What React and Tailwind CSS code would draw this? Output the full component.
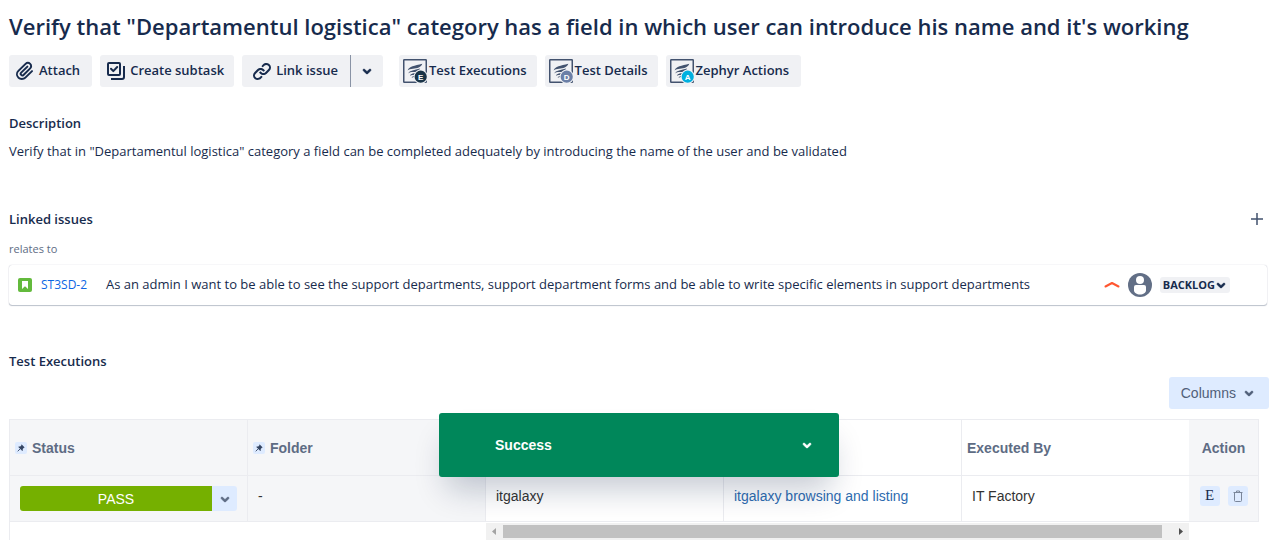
import React from "react";

const ui = "font-['Open_Sans','Noto_Sans',sans-serif]";
const arial = "font-['Liberation_Sans',Arial,sans-serif]";

function Chevron({ className = "w-6" }) {
  return (
    <svg viewBox="0 0 24 24" preserveAspectRatio="xMidYMid slice" className={`h-6 ${className}`} fill="currentColor" stroke="currentColor" strokeWidth="0.6" aria-hidden="true">
      <path d="M8.292 10.293a1.009 1.009 0 000 1.419l2.939 2.965c.218.215.5.322.779.322s.556-.107.769-.322l2.93-2.955a1.01 1.01 0 000-1.419.987.987 0 00-1.406 0l-2.298 2.317-2.307-2.327a.99.99 0 00-1.406 0z" />
    </svg>
  );
}

function AttachIcon() {
  return (
    <svg viewBox="0 0 24 24" className="size-6 shrink-0" fill="currentColor" aria-hidden="true">
      <path d="M11.643 17.965c-1.53 1.495-4.016 1.496-5.542.004a3.773 3.773 0 01.002-5.412l7.147-6.985a2.316 2.316 0 013.233-.003c.893.873.895 2.282.004 3.153l-6.703 6.55a.653.653 0 01-.914-.008.62.62 0 010-.902l6.229-6.087a.941.941 0 000-1.353.995.995 0 00-1.384 0l-6.23 6.087a2.502 2.502 0 000 3.607 2.643 2.643 0 003.683.009l6.703-6.55a4.074 4.074 0 00-.003-5.859 4.306 4.306 0 00-6.002.003l-7.148 6.985a5.655 5.655 0 00-.001 8.118c2.29 2.239 6.015 2.238 8.31-.005l6.686-6.533a.941.941 0 000-1.353.995.995 0 00-1.384 0l-6.686 6.534z" />
    </svg>
  );
}

function SubtaskIcon() {
  return (
    <svg viewBox="0 0 24 24" className="size-6 shrink-0" fill="none" stroke="currentColor" strokeWidth="2" aria-hidden="true">
      <rect x="4" y="4" width="12" height="12" rx="1" />
      <path d="M7 9.8l2.3 2.3L13.2 8" strokeLinecap="round" strokeLinejoin="round" />
      <path d="M20 7v11a2 2 0 01-2 2H7" />
    </svg>
  );
}

function LinkIcon() {
  return (
    <svg viewBox="0 0 24 24" className="size-6 shrink-0" fill="currentColor" aria-hidden="true">
      <path d="M12.856 5.457l-.937.92a1.002 1.002 0 000 1.437 1.047 1.047 0 001.463 0l.984-.966c.967-.95 2.542-1.135 3.602-.288a2.54 2.54 0 01.203 3.81l-2.903 2.852a2.646 2.646 0 01-3.696 0l-1.11-1.09L9 13.57l1.108 1.089c1.822 1.788 4.802 1.788 6.622 0l2.905-2.852a4.558 4.558 0 00-.357-6.82c-1.893-1.517-4.695-1.226-6.422.47" />
      <path d="M11.144 19.543l.937-.92a1.002 1.002 0 000-1.437 1.047 1.047 0 00-1.462 0l-.985.966c-.967.95-2.542 1.135-3.602.288a2.54 2.54 0 01-.203-3.81l2.903-2.852a2.646 2.646 0 013.696 0l1.11 1.09L15 11.43l-1.108-1.089c-1.822-1.788-4.802-1.788-6.622 0l-2.905 2.852a4.558 4.558 0 00.357 6.82c1.893 1.517 4.695 1.226 6.422-.47" />
    </svg>
  );
}

function ZephyrIcon({ letter, color }) {
  return (
    <svg viewBox="0 0 24 24" className="size-6 shrink-0" aria-hidden="true">
      <rect x="0.75" y="0.75" width="22.5" height="22.5" rx="0.5" fill="none" stroke="#42526e" strokeWidth="1.5" />
      <g fill="#42526e">
        <path d="M4.600 11.600C6 7.200 11.500 7 19.300 4.800c-1.200 3.400-5.200 4.700-9.300 4.900-2.400.1-4.200.5-5.400 1.900z" />
        <path d="M5.200 14.600c1.300-3.800 6.300-3.300 11.900-5.200-1.200 2.900-4.200 3.600-6.900 3.700-2.100.1-3.800.3-5 1.500z" />
        <path d="M6.800 17c1.200-2.900 4-2.300 7.500-3.700-1 2.300-2.600 2.500-4.200 2.600-1.400.1-2.400.3-3.300 1.100z" />
        <path d="M8.600 18.900c.7-1.800 2.200-1.700 3.900-2.300-.6 1.500-1.400 1.600-2.300 1.700-.7.1-1.100.2-1.600.6z" />
      </g>
      <circle cx="17.700" cy="17.700" r="7.100" fill="#f0f1f4" />
      <circle cx="17.700" cy="17.700" r="6.100" fill={color} />
      <text x="17.700" y="20.500" textAnchor="middle" fontSize="8" fontWeight="700" fontFamily="Liberation Sans" fill="#fff">
        {letter}
      </text>
    </svg>
  );
}

function PinIcon() {
  return (
    <span className="flex size-3 items-center justify-center rounded-xs bg-[#deebff]">
      <svg viewBox="0 0 12 12" className="size-3" aria-hidden="true">
        <path d="M6.500 2.300l3.200 3.200-.8.200-1.200 1.200.1 1.500-.5.500L3.300 4.900l.5-.5 1.500.1 1.100-1.200z" fill="#344563" />
        <path d="M5.200 6.800L2.700 9.300" stroke="#344563" strokeWidth="0.9" />
      </svg>
    </span>
  );
}

function TrashIcon() {
  return (
    <svg viewBox="0 0 10 12" className="h-3 w-2.5" fill="none" stroke="#7a869a" aria-hidden="true">
      <path d="M0.500 2.500h9M3.500 2V1h3v1" />
      <path d="M1.500 3v7.500a1 1 0 001 1h5a1 1 0 001-1V3" />
    </svg>
  );
}

const toolButton = "flex h-8 items-center rounded-[3px] bg-[#f0f1f4] whitespace-nowrap";
const heading = "text-[13px] leading-5 font-semibold";
const cell = "border-b border-r border-[#ebecf0]";

export default function App() {
  return (
    <main className={`${ui} overflow-hidden bg-white pt-3 pr-[5px] pl-[9px] text-[13px] text-[#172b4d]`}>
      <h1 className="text-[22px] leading-7 font-semibold whitespace-nowrap">
        Verify that "Departamentul logistica" category has a field in which user can introduce his name and it's working
      </h1>

      <div className="mt-[15px] flex font-semibold">
        <button className={`${toolButton} gap-[2px] pr-3 pl-1`}>
          <AttachIcon />
          Attach
        </button>
        <button className={`${toolButton} ml-2 gap-[2px] pr-2.5 pl-1`}>
          <SubtaskIcon />
          Create subtask
        </button>
        <button className={`${toolButton} ml-2 gap-[2px] rounded-r-none pr-3 pl-2`}>
          <LinkIcon />
          Link issue
        </button>
        <button aria-label="More link options" className={`${toolButton} w-[33px] justify-center rounded-l-none border-l border-[#8993a5]`}>
          <Chevron />
        </button>
        <button className={`${toolButton} ml-4 gap-[2px] pr-2.5 pl-1`}>
          <ZephyrIcon letter="E" color="#1a3448" />
          Test Executions
        </button>
        <button className={`${toolButton} ml-2 gap-[2px] pr-2.5 pl-1`}>
          <ZephyrIcon letter="D" color="#6b7fa6" />
          Test Details
        </button>
        <button className={`${toolButton} ml-2 gap-[2px] pr-3 pl-1`}>
          <ZephyrIcon letter="A" color="#00b0e0" />
          Zephyr Actions
        </button>
      </div>

      <section className="mt-[26px]">
        <h2 className={heading}>Description</h2>
        <p className="mt-2 leading-5">
          Verify that in "Departamentul logistica" category a field can be completed adequately by introducing the name of the user and be validated
        </p>
      </section>

      <section className="mt-12">
        <div className="flex items-center justify-between pr-1.5">
          <h2 className={heading}>Linked issues</h2>
          <button aria-label="Link an issue" className="size-3">
            <svg viewBox="0 0 12 12" className="size-3" stroke="#42526e" strokeWidth="1.500" aria-hidden="true">
              <path d="M6 0v12M0 6h12" />
            </svg>
          </button>
        </div>
        <h3 className="mt-3 text-[11px] leading-4 text-[#5e6c84]">relates to</h3>
        <div className="mt-2 mr-[2px] flex h-10 items-center rounded-[3px] pr-[37px] pl-[9px] shadow-[0_1px_1px_rgba(9,30,66,0.25),0_0_1px_rgba(9,30,66,0.31)]">
          <svg viewBox="0 0 14 14" className="size-3.5 shrink-0" aria-hidden="true">
            <rect width="14" height="14" rx="2" fill="#63ba3c" />
            <path d="M4 3h6v8L7 8.300 4 11z" fill="#fff" />
          </svg>
          <a href="#ST3SD-2" className="ml-[9px] w-[65px] text-[12px] text-[#0c66e4]">ST3SD-2</a>
          <span className="grow whitespace-nowrap">
            As an admin I want to be able to see the support departments, support department forms and be able to write specific elements in support departments
          </span>
          <svg viewBox="0 0 16 8" className="h-2 w-4 shrink-0" fill="none" stroke="#ff5630" strokeWidth="2" strokeLinecap="round" strokeLinejoin="round" aria-hidden="true">
            <path d="M1.500 5.500L8 2l6.500 3.500" />
          </svg>
          <svg viewBox="0 0 24 24" className="ml-2 size-6 shrink-0" aria-hidden="true">
            <circle cx="12" cy="12" r="12" fill="#626f86" />
            <circle cx="12" cy="7" r="4" fill="#fff" />
            <path d="M6 14a2 2 0 012-2h8a2 2 0 012 2v3.500c0 2.200-2.700 4-6 4s-6-1.800-6-4z" fill="#fff" />
          </svg>
          <button className="ml-2 flex h-4 items-center rounded-[3px] bg-[#f0f1f4] px-[3px] text-[11px] font-bold">
            BACKLOG
            <Chevron className="w-3" />
          </button>
        </div>
      </section>

      <section className={`relative mt-[46px] ${arial}`}>
        <h2 className={`${heading} ${ui}`}>Test Executions</h2>
        <div className="mt-1.5 flex justify-end">
          <button className="flex h-8 items-center gap-[1px] rounded-[3px] bg-[#deebff] pr-2 pl-3 text-sm text-[#505f79]">
            Columns
            <Chevron />
          </button>
        </div>

        <div className="mt-2.5 mr-2.5 border-l border-[#ebecf0]">
          <table className="w-full table-fixed border-separate border-spacing-0 border-t border-[#ebecf0] text-left text-sm text-[#333]">
            <colgroup>
              <col className="w-[238px]" />
              <col className="w-[238px]" />
              <col className="w-[238px]" />
              <col className="w-[238px]" />
              <col />
              <col className="w-[70px]" />
            </colgroup>
            <thead className="text-[#5e6c84]">
              <tr className="h-14">
                <th className={`${cell} bg-[#f5f6f8] pl-[5px]`}>
                  <span className="flex items-center gap-[5px]"><PinIcon />Status</span>
                </th>
                <th className={`${cell} bg-[#f5f6f8] pl-[5px]`}>
                  <span className="flex items-center gap-[5px]"><PinIcon />Folder</span>
                </th>
                <th className={cell}></th>
                <th className={cell}></th>
                <th className={`${cell} border-r-0 pl-[5px]`}>Executed By</th>
                <th className={`${cell} bg-[#f5f6f8] text-center`}>Action</th>
              </tr>
            </thead>
            <tbody>
              <tr className="h-[46px]">
                <td className={`${cell} bg-[#f5f6f8] px-2.5`}>
                  <div className="flex h-[25px] overflow-hidden rounded-[3px]">
                    <button className="grow bg-[#75b000] text-white">PASS</button>
                    <button aria-label="Change status" className="flex w-[25px] items-center justify-center bg-[#deebff] text-[#5e6c84]">
                      <Chevron />
                    </button>
                  </div>
                </td>
                <td className={`${cell} bg-[#f5f6f8] px-2.5 pb-1.5`}>-</td>
                <td className={`${cell} px-2.5 pb-1.5`}>itgalaxy</td>
                <td className={`${cell} px-2.5 pb-1.5`}>
                  <a href="#cycle" className="text-[#2e6cb0]">itgalaxy browsing and listing</a>
                </td>
                <td className={`${cell} border-r-0 px-2.5 pb-1.5`}>IT Factory</td>
                <td className={`${cell} bg-[#f5f6f8] pb-1.5`}>
                  <div className="flex justify-center gap-2">
                    <button aria-label="Execute" className="flex size-5 items-center justify-center rounded-[3px] bg-[#deebff] font-['Liberation_Serif',serif] text-[15px] text-[#172b4d]">E</button>
                    <button aria-label="Delete" className="flex size-5 items-center justify-center rounded-[3px] bg-[#deebff]">
                      <TrashIcon />
                    </button>
                  </div>
                </td>
              </tr>
            </tbody>
          </table>
          <div className="mt-px flex pr-[70px] pl-[476px]">
            <div className="flex h-[17px] grow items-center bg-[#f1f1f1]">
              <svg viewBox="0 0 17 17" className="size-[17px]" fill="#a3a3a3" aria-hidden="true"><path d="M10 5v7L6 8.500z" /></svg>
              <div className="h-[13px] grow bg-[#c1c1c1]" />
              <svg viewBox="0 0 17 17" className="ml-2.5 size-[17px]" fill="#505050" aria-hidden="true"><path d="M7 5v7l4-3.500z" /></svg>
            </div>
          </div>
        </div>

        <div role="status" className="absolute top-[62px] left-1/2 flex h-16 w-[400px] -translate-x-1/2 items-center justify-between rounded-[3px] bg-[#00875a] pr-5 pl-14 text-sm font-bold text-white shadow-[0_20px_32px_-8px_rgba(9,30,66,0.24)]">
          Success
          <button aria-label="Show details"><Chevron /></button>
        </div>
      </section>
    </main>
  );
}
